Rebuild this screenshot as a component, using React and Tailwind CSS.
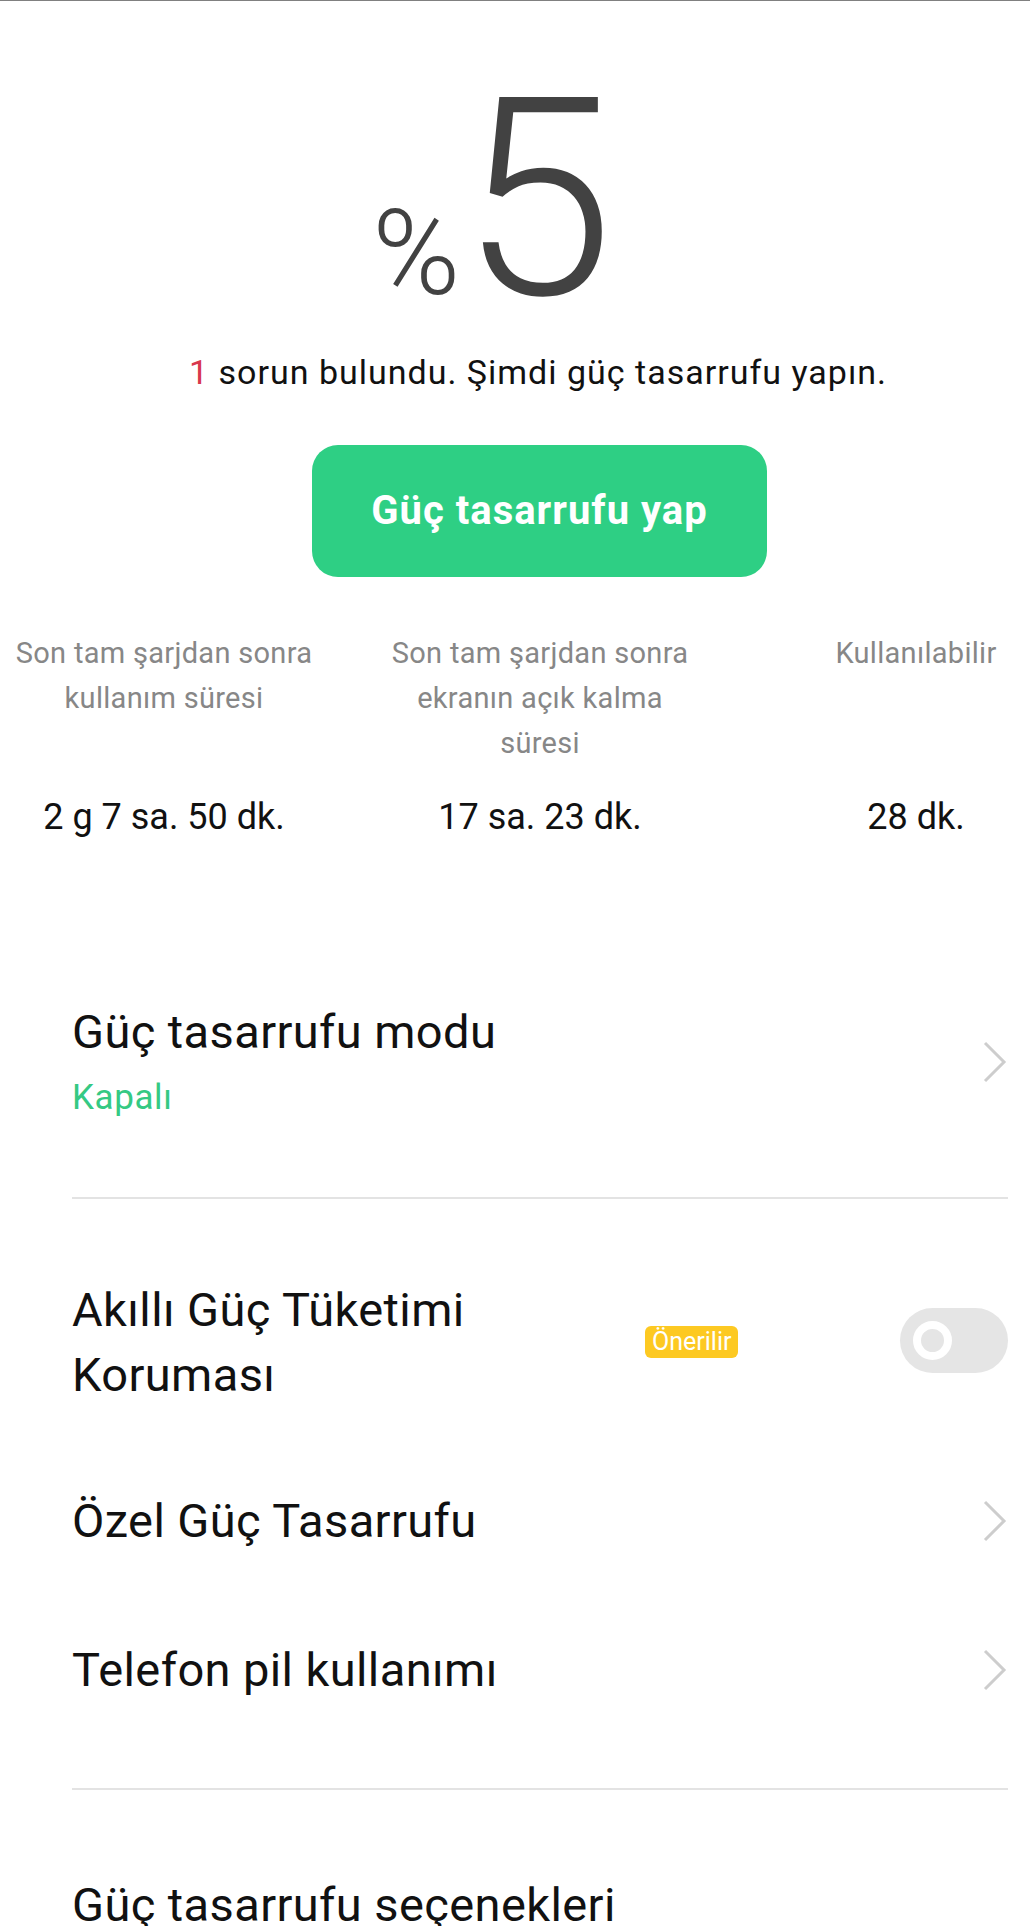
import { ChevronRight } from 'lucide-react';

const stats = [
  { label: 'Son tam şarjdan sonra kullanım süresi', value: '2 g 7 sa. 50 dk.' },
  { label: 'Son tam şarjdan sonra ekranın açık kalma süresi', value: '17 sa. 23 dk.' },
  { label: 'Kullanılabilir', value: '28 dk.' },
];

function Chevron() {
  return (
    <svg width="26" height="42" viewBox="0 0 26 42" className="shrink-0">
      <path d="M3 2 L22 21 L3 40" fill="none" stroke="#cdcdcd" strokeWidth="3" />
    </svg>
  );
}

export default function App() {
  return (
    <div className="w-[1030px] h-[1926px] overflow-hidden bg-white font-['Roboto','Noto_Sans',sans-serif] border-t border-[#808080] flex flex-col">
      {/* Battery level */}
      <div className="pt-[60px] flex justify-center items-baseline gap-0 pr-[44px] text-[#424242] font-light">
        <span className="text-[119px] leading-none">%</span>
        <span className="text-[277px] leading-none">5</span>
      </div>

      <p className="mt-[14px] pl-[46px] text-center text-[34px] leading-[40px] tracking-[1px] text-[#111]">
        <span className="text-[#d8384d]">1</span> sorun bulundu. Şimdi güç tasarrufu yapın.
      </p>

      <div className="mt-[53px] pl-[49px] flex justify-center">
        <button className="w-[455px] h-[132px] rounded-[26px] bg-[#2ecf84] text-white text-[40px] tracking-[1px] font-bold">
          Güç tasarrufu yap
        </button>
      </div>

      {/* Stats */}
      <div className="mt-[54px] -ml-[24px] flex">
        {stats.map((s) => (
          <div key={s.value} className="w-[376px] shrink-0 flex flex-col items-center">
            <div className="h-[135px] w-[312px] text-center text-[29px] leading-[45px] tracking-[0.3px] text-[#878787]">
              {s.label}
            </div>
            <div className="mt-[31px] text-[36px] leading-[40px] text-[#111]">{s.value}</div>
          </div>
        ))}
      </div>

      {/* Settings list */}
      <div className="mt-[167px] pl-[72px] pr-[22px] text-[#111] tracking-[0.4px]">
        <div className="flex items-center">
          <div className="flex-1">
            <div className="text-[47px] leading-[56px]">Güç tasarrufu modu</div>
            <div className="mt-[17px] text-[35px] leading-[42px] tracking-[0.6px] text-[#35c983]">Kapalı</div>
          </div>
          <Chevron />
        </div>

        <div className="mt-[78px] h-[2px] bg-[#e3e3e3]" />

        <div className="mt-[78px] flex items-center">
          <div className="w-[480px] text-[47px] leading-[65px]">Akıllı Güç Tüketimi Koruması</div>
          <span className="ml-[93px] h-[32px] px-[7px] rounded-[6px] bg-[#fdc922] text-white text-[25px] leading-[32px] tracking-normal">
            Önerilir
          </span>
          <div className="flex-1" />
          <div className="mb-[4px] w-[108px] h-[65px] rounded-full bg-[#e5e5e5] flex items-center pl-[13px]">
            <div className="w-[39px] h-[39px] rounded-full border-[8px] border-white bg-[#e5e5e5]" />
          </div>
        </div>

        <div className="mt-[86px] flex items-center justify-between">
          <div className="text-[47px] leading-[56px]">Özel Güç Tasarrufu</div>
          <Chevron />
        </div>

        <div className="mt-[93px] flex items-center justify-between">
          <div className="text-[47px] leading-[56px]">Telefon pil kullanımı</div>
          <Chevron />
        </div>

        <div className="mt-[90px] h-[2px] bg-[#e3e3e3]" />

        <div className="mt-[87px] text-[47px] leading-[56px]">Güç tasarrufu seçenekleri</div>
      </div>
      <div className="flex-1" />
      <div className="h-px bg-[#c8c8c8]" />
    </div>
  );
}
